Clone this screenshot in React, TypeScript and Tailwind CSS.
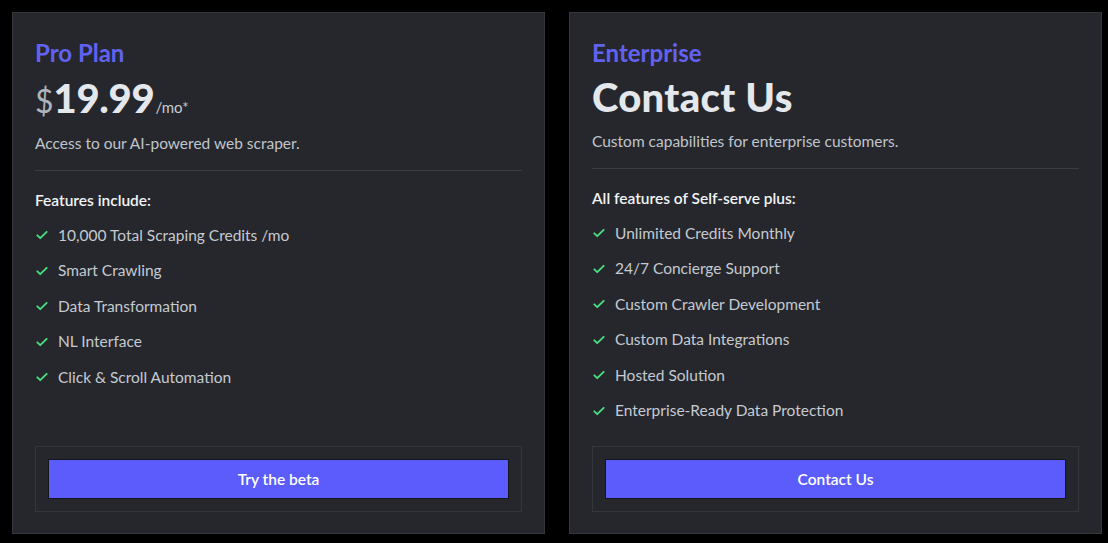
import React from 'react';

type Plan = {
  name: string;
  price?: string;
  headline?: string;
  description: string;
  featuresTitle: string;
  features: string[];
  cta: string;
};

const plans: Plan[] = [
  {
    name: 'Pro Plan',
    price: '19.99',
    description: 'Access to our AI-powered web scraper.',
    featuresTitle: 'Features include:',
    features: [
      '10,000 Total Scraping Credits /mo',
      'Smart Crawling',
      'Data Transformation',
      'NL Interface',
      'Click & Scroll Automation',
    ],
    cta: 'Try the beta',
  },
  {
    name: 'Enterprise',
    headline: 'Contact Us',
    description: 'Custom capabilities for enterprise customers.',
    featuresTitle: 'All features of Self-serve plus:',
    features: [
      'Unlimited Credits Monthly',
      '24/7 Concierge Support',
      'Custom Crawler Development',
      'Custom Data Integrations',
      'Hosted Solution',
      'Enterprise-Ready Data Protection',
    ],
    cta: 'Contact Us',
  },
];

const Check = () => (
  <svg width="14" height="14" viewBox="0 0 24 24" fill="none" stroke="#4ade80" strokeWidth="3.2" strokeLinecap="round" strokeLinejoin="round">
    <path d="M4 12.5l5 5L20 6.5" />
  </svg>
);

const PlanCard: React.FC<{ plan: Plan }> = ({ plan }) => (
  <div className="flex-1 flex flex-col bg-[#25272c] border border-[#34373c] px-[22px] pt-[24px] pb-[21px]">
    <h3 className="text-[24px] leading-[32px] font-bold text-[#6262f2]">{plan.name}</h3>
    {plan.price ? (
      <div className="flex items-baseline mt-[4px] h-[50px]">
        <span className="text-[32px] leading-[50px] text-[#aeb4bc]">$</span>
        <span className="text-[40px] leading-[50px] font-black text-[#e4e8ec] tracking-[-0.3px]">{plan.price}</span>
        <span className="text-[15px] text-[#c8ccd2] ml-[1px]">/mo*</span>
      </div>
    ) : (
      <div className="text-[40px] leading-[50px] font-black text-[#e4e8ec] mt-[3px] h-[50px] tracking-[0.3px]">{plan.headline}</div>
    )}
    <p className={`text-[15.5px] leading-[24px] text-[#c0c5cc] ${plan.price ? 'mt-[8px]' : 'mt-[7px]'}`}>{plan.description}</p>
    <div className="border-t border-[#3a3d43] mt-[15px]" />
    <div className="text-[15.5px] leading-[24px] font-semibold text-[#f1f3f5] mt-[17px]">{plan.featuresTitle}</div>
    <ul className="mt-[5px]">
      {plan.features.map((f) => (
        <li key={f} className="flex items-center h-[35.5px] pt-[1px]">
          <span className="w-[23px] flex items-center"><Check /></span>
          <span className="text-[15.5px] text-[#c6cad1]">{f}</span>
        </li>
      ))}
    </ul>
    <div className="mt-auto border border-[#33363b] p-[12px]">
      <button className="w-full h-[40px] pt-[1px] bg-[#5b5cfb] border border-[#15161a] text-white text-[15.5px] font-semibold">
        {plan.cta}
      </button>
    </div>
  </div>
);

export default function App() {
  return (
    <div
      className="w-full h-[543px] bg-black flex gap-6 pl-3 pr-[6px] pt-[12px] pb-[9px]"
      style={{ fontFamily: '"Lato", "Open Sans", sans-serif' }}
    >
      {plans.map((p) => (
        <PlanCard key={p.name} plan={p} />
      ))}
    </div>
  );
}
